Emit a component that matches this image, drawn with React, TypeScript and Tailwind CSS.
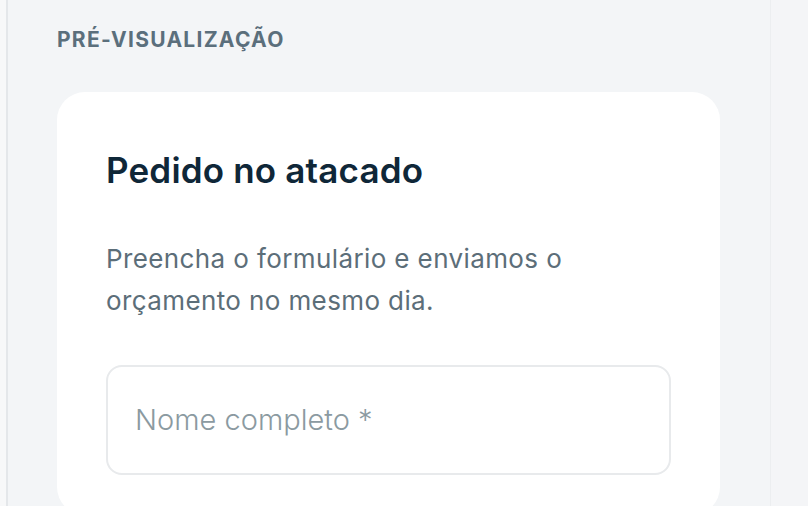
import React from "react";

export default function App() {
  return (
    <div
      className="flex h-[506px] w-full overflow-hidden bg-[#f3f5f7]"
      style={{ fontFamily: "Inter, 'Noto Sans', sans-serif" }}
    >
      <div className="w-[8px] shrink-0 border-r-2 border-[#e4e7ea] bg-[#f7f8f9]" />

      <main className="w-[762px] shrink-0 pl-[49px] pt-[26px]">
        <div className="text-[21px] font-bold uppercase leading-[28px] tracking-[0.06em] text-[#5b6f7c]">
          Pré-visualização
        </div>

        <section className="mt-[38px] w-[663px] rounded-[28px] bg-white px-[49px] pt-[57px]">
          <h2 className="text-[35px] font-semibold leading-[42px] tracking-[0.005em] text-[#0f2738]">
            Pedido no atacado
          </h2>
          <p className="mt-[47px] text-[26px] leading-[42px] tracking-[0.015em] text-[#5c6e79]">
            Preencha o formulário e enviamos o
            <br />
            orçamento no mesmo dia.
          </p>
          <div className="mt-[43px] flex h-[110px] items-center rounded-[16px] border-2 border-[#e8eaec] px-[27px]">
            <span className="text-[29px] font-light text-[#8b9aa1]">
              Nome completo *
            </span>
          </div>
          <div className="h-[40px]" />
        </section>
      </main>

      <div className="flex-1 border-l border-[#eceef0] bg-[#f4f5f7]" />
    </div>
  );
}
